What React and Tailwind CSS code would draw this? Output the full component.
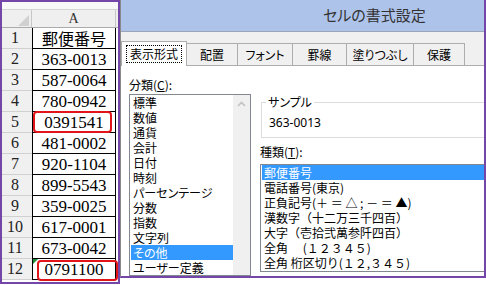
import React from "react";

const values = [
  "郵便番号",
  "363-0013",
  "587-0064",
  "780-0942",
  "0391541",
  "481-0002",
  "920-1104",
  "899-5543",
  "359-0025",
  "617-0001",
  "673-0042",
  "0791100",
];

const categories = [
  "標準",
  "数値",
  "通貨",
  "会計",
  "日付",
  "時刻",
  "パーセンテージ",
  "分数",
  "指数",
  "文字列",
  "その他",
  "ユーザー定義",
];

const kinds = [
  "郵便番号",
  "電話番号(東京)",
  "正負記号(＋ ＝ △ ; － ＝ ▲)",
  "漢数字（十二万三千四百）",
  "大字（壱拾弐萬参阡四百）",
  "全角　 (１２３４５)",
  "全角 桁区切り(１２,３４５)",
];

const tabs = [
  { label: "配置", w: "w-[51px]" },
  { label: "フォント", w: "w-[55px]" },
  { label: "罫線", w: "w-[54px]" },
  { label: "塗りつぶし", w: "w-[67px]" },
  { label: "保護", w: "w-[51px]" },
];

const Sheet = () => {
  return (
    <div className="flex h-[284px] w-[120px] shrink-0 flex-col border-2 border-[#7446a8] bg-white">
      <div className="h-[8px] border-b border-[#d5d5d5] bg-[#f8f8f8]" />
      <div className="flex h-[18px] border-b border-[#ababab] bg-[#efefef]">
        <div className="flex w-[30px] items-end justify-end border-r border-[#c6c6c6] pb-[1px] pr-[2px]">
          <div className="h-0 w-0 border-b-[11px] border-l-[11px] border-b-[#d0d0d0] border-l-transparent" />
        </div>
        <div className="flex w-[84px] items-end justify-center border-r border-[#c6c6c6] font-['Liberation_Serif',serif] text-[14px] leading-[16px] text-[#333]">
          A
        </div>
      </div>
      {values.map((v, i) => (
        <div key={i} className="flex h-[21px]">
          <div className="flex w-[30px] items-center justify-center border-b border-[#d0d0d0] bg-[#f0f0f0] pr-[4px] font-['Liberation_Serif',serif] text-[16px] leading-none text-[#222]">
            {i + 1}
          </div>
          <div
            className={
              "relative flex w-[84px] items-center justify-center border-x border-b border-black text-black " +
              (i === 0
                ? "font-['Noto_Sans_CJK_JP',sans-serif] text-[16px] leading-none"
                : "font-['Liberation_Serif',serif] text-[17px] leading-none")
            }
          >
            {v}
            {i === 4 && (
              <div className="absolute -top-[1px] bottom-[-1px] left-0 right-[3px] rounded-[4px] border-2 border-[#e2151b]" />
            )}
            {i === 11 && (
              <>
                <div className="absolute left-0 top-0 h-0 w-0 border-r-[5px] border-t-[5px] border-r-transparent border-t-[#1f8a3a]" />
                <div className="absolute bottom-[-2px] left-[4px] right-[-3px] top-[1px] rounded-[4px] border-2 border-[#e2151b]" />
              </>
            )}
          </div>
        </div>
      ))}
    </div>
  );
};

const Dialog = () => {
  return (
    <div className="flex h-[278px] w-[366px] shrink-0 flex-col overflow-hidden border-b-2 border-l border-r-2 border-b-[#7446a8] border-l-[#8a8a8a] border-r-[#7446a8] font-['Noto_Sans_CJK_JP',sans-serif] [font-feature-settings:'palt']">
      <div className="flex h-[32px] shrink-0 items-center border-b border-[#9aa6b8] bg-[#aec3ea] pl-[202px] text-[15px] text-[#333]">
        セルの書式設定
      </div>
      <div className="flex h-[33px] shrink-0 items-end bg-[#f0f0f0]">
        <div className="relative z-10 -mb-px flex h-[25px] w-[66px] items-start justify-center border-x border-t border-[#adadad] bg-white pt-[3px]">
          <div className="border border-dotted border-black px-[3px] text-[12px] leading-[16px] text-black">
            表示形式
          </div>
        </div>
        {tabs.map((t) => (
          <div
            key={t.label}
            className={
              "flex h-[22px] items-center justify-center border-t border-r border-[#adadad] bg-[#f0f0f0] text-[12px] text-black " +
              t.w
            }
          >
            {t.label}
          </div>
        ))}
      </div>
      <div className="flex min-h-0 flex-1 border-t border-[#adadad] bg-white text-[12px] text-black">
        <div className="ml-[8px] flex w-[122px] shrink-0 flex-col">
          <div className="mt-[9px] h-[19px] leading-[19px]">
            分類(<span className="underline">C</span>):
          </div>
          <div className="flex h-[200px] border border-[#828790]">
            <div className="flex w-[103px] flex-col pl-[1px]">
              {categories.map((c) => (
                <div
                  key={c}
                  className={
                    "h-[15px] overflow-hidden pl-[2px] leading-[15px] " +
                    (c === "その他" ? "bg-[#3399ff] text-white" : "")
                  }
                >
                  {c}
                </div>
              ))}
            </div>
            <div className="flex w-[17px] justify-center bg-[#f0f0f0] pt-[6px]">
              <svg width="9" height="6" viewBox="0 0 9 6">
                <path d="M1 5 L4.5 1.5 L8 5" fill="none" stroke="#c2c2c2" strokeWidth="1.6" />
              </svg>
            </div>
          </div>
        </div>
        <div className="ml-[9px] flex w-[260px] shrink-0 flex-col">
          <div className="relative ml-[1px] mt-[36px] h-[36px] border border-[#dcdcdc] pl-[7px] pt-[13px] font-['Noto_Sans',sans-serif] text-[12px] leading-[14px]">
            363-0013
            <div className="absolute -top-[9px] left-[4px] bg-white px-[2px] font-['Noto_Sans_CJK_JP',sans-serif] leading-[16px]">
              サンプル
            </div>
          </div>
          <div className="mt-[4px] h-[19px] leading-[19px]">
            種類(<span className="underline">T</span>):
          </div>
          <div className="mt-[3px] flex h-[108px] flex-col border-y border-l border-[#828790] pl-[1px] [font-feature-settings:normal]">
            {kinds.map((k, i) => (
              <div
                key={k}
                className={
                  "h-[15px] overflow-hidden whitespace-pre pl-[2px] leading-[15px] " +
                  (i === 0 ? "bg-[#3399ff] text-white" : "")
                }
              >
                {k}
              </div>
            ))}
          </div>
        </div>
      </div>
    </div>
  );
};

export default function App() {
  return (
    <div className="flex h-[285px] w-[486px] overflow-hidden bg-white">
      <Sheet />
      <Dialog />
    </div>
  );
}
